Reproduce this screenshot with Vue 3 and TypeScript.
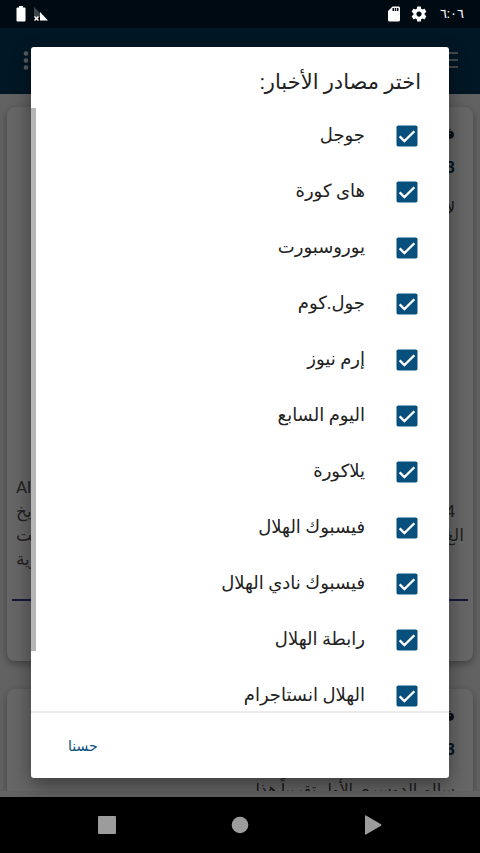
<script setup lang="ts">
import { ref } from 'vue'

interface Source {
  id: string
  label: string
  checked: boolean
}

const labels: string[] = [
  'جوجل',
  'هاى كورة',
  'يوروسبورت',
  'جول.كوم',
  'إرم نيوز',
  'اليوم السابع',
  'يلاكورة',
  'فيسبوك الهلال',
  'فيسبوك نادي الهلال',
  'رابطة الهلال',
  'الهلال انستاجرام',
]

const sources = ref<Source[]>(
  labels.map((label, i) => ({ id: `source-${i}`, label, checked: true })),
)
</script>

<template>
  <div class="screen" dir="rtl" lang="ar">
    <div class="app">
      <header class="status">
        <span class="clock">٦:٠٦</span>
        <svg class="gear" viewBox="0 0 24 24" aria-hidden="true">
          <path d="M19.43 12.98c.04-.32.07-.64.07-.98s-.03-.66-.07-.98l2.11-1.65c.19-.15.24-.42.12-.64l-2-3.46c-.12-.22-.39-.3-.61-.22l-2.49 1c-.52-.4-1.08-.73-1.69-.98l-.38-2.65C14.46 2.18 14.25 2 14 2h-4c-.25 0-.46.18-.49.42l-.38 2.65c-.61.25-1.17.59-1.69.98l-2.49-1c-.23-.09-.49 0-.61.22l-2 3.46c-.13.22-.07.49.12.64l2.11 1.65c-.04.32-.07.65-.07.98s.03.66.07.98l-2.11 1.65c-.19.15-.24.42-.12.64l2 3.46c.12.22.39.3.61.22l2.49-1c.52.4 1.08.73 1.69.98l.38 2.65c.03.24.24.42.49.42h4c.25 0 .46-.18.49-.42l.38-2.65c.61-.25 1.17-.59 1.69-.98l2.49 1c.23.09.49 0 .61-.22l2-3.46c.12-.22.07-.49-.12-.64l-2.11-1.65zM12 15.500c-1.930 0-3.500-1.570-3.500-3.500s1.570-3.500 3.500-3.500 3.500 1.570 3.500 3.500-1.570 3.500-3.500 3.500z" />
        </svg>
        <svg class="card-icon" viewBox="0 0 24 24" aria-hidden="true">
          <path d="M18 2h-8L4.020 8 4 20c0 1.100.9 2 2 2h12c1.100 0 2-.9 2-2V4c0-1.100-.9-2-2-2zm-6 6h-2V4h2v4zm3 0h-2V4h2v4zm3 0h-2V4h2v4z" />
        </svg>
        <span class="spacer"></span>
        <svg class="signal" viewBox="0 0 16 16" aria-hidden="true">
          <path class="faint" d="M1 1l6 6v4H1z" />
          <path d="M7 6l8 8.500H7z" />
          <path class="cross" d="M1.500 10.500l4 4M5.500 10.500l-4 4" />
        </svg>
        <svg class="battery" viewBox="0 0 10 16" aria-hidden="true">
          <path d="M3 0h4v1.500h1.500Q9.500 1.500 9.500 2.500v12Q9.500 15.500 8.500 15.500h-7Q.5 15.500.5 14.500v-12Q.5 1.500 1.500 1.500H3z" />
        </svg>
      </header>

      <div class="toolbar">
        <button class="bar-button" aria-label="القائمة">
          <svg viewBox="0 0 24 24"><path d="M2 3.200h20v1.600H2zM2 10.200h20v1.600H2zM2 17.200h20v1.600H2z" /></svg>
        </button>
        <button class="bar-button" aria-label="المزيد">
          <svg viewBox="0 0 24 24">
            <circle cx="12" cy="4.500" r="2.300" /><circle cx="12" cy="11.500" r="2.300" /><circle cx="12" cy="18.500" r="2.300" />
          </svg>
        </button>
      </div>

      <main class="feed">
        <article class="post">
          <div class="head">
            <strong>ف</strong>
            <strong class="when">3</strong>
            <span>لا</span>
          </div>
          <div class="body">
            <p><span></span><bdi dir="ltr">Al</bdi></p>
            <p><span class="number">4</span><span>يخ</span></p>
            <p><span>الغ</span><span>قت</span></p>
            <p><span></span><span>رية</span></p>
          </div>
        </article>
        <article class="post">
          <div class="head">
            <strong>ف</strong>
            <strong class="when">3</strong>
            <span>سالم الدوسري الأول تقريباً هذا</span>
          </div>
        </article>
      </main>

      <div class="scrim">
        <form class="dialog" role="dialog" aria-labelledby="dialog-title" @submit.prevent>
          <h1 id="dialog-title">اختر مصادر الأخبار:</h1>
          <div class="list">
            <label v-for="s in sources" :key="s.id" class="row" :for="s.id">
              <span class="tick">
                <input :id="s.id" v-model="s.checked" type="checkbox" />
                <svg viewBox="0 0 24 24" aria-hidden="true">
                  <rect x="3" y="3" width="18" height="18" rx="1.500" />
                  <path v-if="s.checked" d="M5.700 12.300l4.100 4.100 8.500-8.500" />
                </svg>
              </span>
              <span class="name">{{ s.label }}</span>
            </label>
            <span class="thumb"></span>
          </div>
          <footer class="actions"><button type="submit">حسنا</button></footer>
        </form>
      </div>
    </div>

    <nav class="nav">
      <button aria-label="رجوع"><svg viewBox="0 0 20 20"><path d="M2 1v18q0 1 1 .5l15-8.700q1-.8 0-1.600L3 .5Q2 0 2 1z" /></svg></button>
      <button aria-label="الرئيسية"><svg viewBox="0 0 20 20"><circle cx="10" cy="10" r="8.300" /></svg></button>
      <button aria-label="التطبيقات"><svg viewBox="0 0 20 20"><rect x="1" y="1" width="18" height="18" rx="1" /></svg></button>
    </nav>
  </div>
</template>

<style>
body {
  margin: 0;
  background: #000;
}
</style>

<style scoped>
* {
  box-sizing: border-box;
}
.screen {
  display: flex;
  flex-direction: column;
  height: 100vh;
  font-family: Roboto, "DejaVu Sans", sans-serif;
  color: #222;
}
button {
  padding: 0;
  border: 0;
  background: none;
  font: inherit;
}
.app {
  position: relative;
  display: flex;
  flex: 1;
  flex-direction: column;
  min-height: 0;
  overflow: hidden;
  background: #f6f6f6;
}
.status {
  position: relative;
  z-index: 2;
  display: flex;
  flex: none;
  align-items: center;
  height: 28px;
  padding: 0 16px;
  background: #000a12;
  color: #fff;
  fill: #fff;
}
.clock {
  margin-left: 12px;
  font-size: 13px;
  line-height: 20px;
}
.gear {
  width: 18px;
  height: 18px;
  margin-left: 7px;
}
.card-icon {
  width: 18px;
  height: 18px;
}
.spacer {
  flex: 1;
}
.signal {
  width: 16px;
  height: 16px;
  margin-left: 7px;
}
.signal .faint {
  fill: #3c454c;
}
.signal .cross {
  stroke: #fff;
  stroke-width: 1.5;
}
.battery {
  width: 10px;
  height: 16px;
}
.toolbar {
  display: flex;
  flex: none;
  align-items: center;
  justify-content: space-between;
  height: 66px;
  padding: 0 20px 0 14px;
  background: #053b5c;
}
.bar-button {
  width: 24px;
  height: 24px;
}
.bar-button svg {
  display: block;
  fill: #e0e0e0;
}
.feed {
  display: flex;
  flex: 1;
  flex-direction: column;
  gap: 28px;
  min-height: 0;
  margin-bottom: 6px;
  padding: 13px 7px 0;
  overflow: hidden;
}
.post {
  display: flex;
  flex: none;
  flex-direction: column;
  justify-content: space-between;
  height: 554px;
  border-radius: 8px;
  background: #fff;
  box-shadow: 0 3px 8px rgba(0, 0, 0, 0.35);
}
.head {
  display: flex;
  flex-direction: column;
  padding: 10px 18px;
  font-size: 16px;
  line-height: 34px;
}
.head span {
  padding-top: 6px;
  color: #444;
}
.when {
  color: #123a55;
}
.body {
  margin: 0 5px 60px;
  padding: 0 0 28px;
  border-bottom: 2px solid #3a3a9c;
  color: #555;
}
.body p {
  display: flex;
  justify-content: space-between;
  margin: 0;
  padding: 0 4px;
  font-size: 17px;
  line-height: 24px;
}
.number {
  padding-right: 9px;
}
.scrim {
  position: absolute;
  z-index: 1;
  inset: 0;
  display: flex;
  padding: 47px 31px 19px;
  background: rgba(0, 0, 0, 0.6);
}
.dialog {
  display: flex;
  flex: 1;
  flex-direction: column;
  min-width: 0;
  border-radius: 3px;
  background: #fff;
  box-shadow: 0 8px 20px rgba(0, 0, 0, 0.4);
}
h1 {
  flex: none;
  margin: 0;
  padding: 17px 28px 8px;
  font-size: 21px;
  font-weight: 400;
  line-height: 36px;
}
.list {
  position: relative;
  flex: 1;
  min-height: 0;
  overflow: hidden;
}
.row {
  display: flex;
  align-items: center;
  gap: 28px;
  height: 56px;
  padding: 0 28px;
  font-size: 18px;
  line-height: 28px;
}
.name {
  padding-bottom: 2px;
}
.tick {
  display: grid;
  width: 28px;
  height: 28px;
}
.tick > * {
  grid-area: 1 / 1;
  width: 28px;
  height: 28px;
  margin: 0;
}
.tick input {
  opacity: 0;
}
.tick rect {
  fill: #07507e;
}
.tick path {
  fill: none;
  stroke: #fff;
  stroke-width: 2;
}
.thumb {
  position: absolute;
  top: 0;
  left: 0;
  width: 5px;
  height: 90%;
  background: #b5b5b5;
}
.actions {
  display: flex;
  flex: none;
  justify-content: flex-end;
  height: 67px;
  padding: 0 37px;
  border-top: 2px solid #ebebeb;
}
.actions button {
  color: #07507e;
  font-size: 14px;
  line-height: 24px;
}
.nav {
  display: flex;
  flex: none;
  align-items: center;
  justify-content: space-around;
  height: 56px;
  padding: 0 40px;
  background: #000;
}
.nav button {
  width: 20px;
  height: 20px;
}
.nav svg {
  display: block;
  fill: #9c9c9c;
}
</style>
